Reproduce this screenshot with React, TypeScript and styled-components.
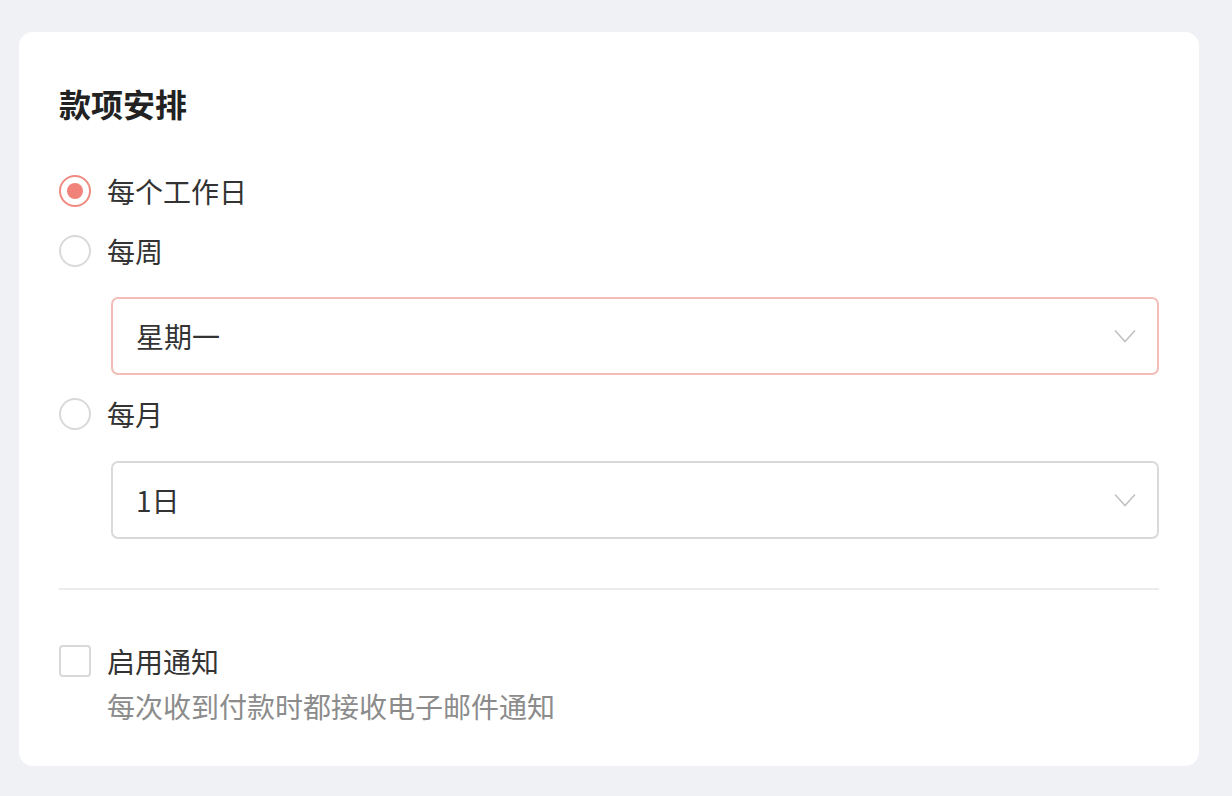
import React, { useState } from 'react';
import styled, { createGlobalStyle } from 'styled-components';

const GlobalStyle = createGlobalStyle`
  html, body {
    margin: 0;
    padding: 0;
    background: #f0f1f5;
  }
  body {
    font-family: "Noto Sans CJK SC", "Noto Sans", sans-serif;
    color: #333;
  }
`;

const options = [
  { key: 'day', label: '每个工作日' },
  { key: 'week', label: '每周', select: '星期一' },
  { key: 'month', label: '每月', select: '1日' },
];

export default function App() {
  const [picked, setPicked] = useState('day');
  const [notify, setNotify] = useState(false);

  return (
    <>
      <GlobalStyle />
      <Page>
        <Card>
          <Title>款项安排</Title>
          <Group>
            {options.map((o, i) => (
              <React.Fragment key={o.key}>
                <RadioRow first={i === 0} onClick={() => setPicked(o.key)}>
                  <Radio checked={picked === o.key} />
                  <Label>{o.label}</Label>
                </RadioRow>
                {o.select && (
                  <Select active={o.key === 'week'}>
                    <span>{o.select}</span>
                    <svg width="22" height="14" viewBox="0 0 22 14" fill="none">
                      <path d="M1 1.5l10 11 10-11" stroke="#c2c2c2" strokeWidth="1.6" />
                    </svg>
                  </Select>
                )}
              </React.Fragment>
            ))}
          </Group>
          <Divider />
          <CheckRow onClick={() => setNotify(!notify)}>
            <Checkbox checked={notify} />
            <div>
              <Label>启用通知</Label>
              <Hint>每次收到付款时都接收电子邮件通知</Hint>
            </div>
          </CheckRow>
        </Card>
      </Page>
    </>
  );
}

const Page = styled.div`
  padding: 32px 0 30px 19px;
`;

const Card = styled.div`
  width: 1180px;
  box-sizing: border-box;
  background: #fff;
  border-radius: 14px;
  padding: 48px 40px 40px;
`;

const Title = styled.h2`
  margin: 0;
  font-size: 32px;
  line-height: 46px;
  font-weight: 700;
  color: #222;
`;

const Group = styled.div`
  margin-top: 41px;
  display: flex;
  flex-direction: column;
`;

const RadioRow = styled.div<{ first?: boolean }>`
  display: flex;
  align-items: center;
  gap: 16px;
  height: 48px;
  margin-top: ${(p) => (p.first ? '0' : '12px')};
  cursor: pointer;
`;

const Radio = styled.span<{ checked?: boolean }>`
  width: 32px;
  height: 32px;
  box-sizing: border-box;
  border-radius: 50%;
  border: 2px solid ${(p) => (p.checked ? '#f08a80' : '#d9d9d9')};
  display: flex;
  align-items: center;
  justify-content: center;
  &::after {
    content: '';
    width: 16px;
    height: 16px;
    border-radius: 50%;
    background: #f08279;
    display: ${(p) => (p.checked ? 'block' : 'none')};
  }
`;

const Label = styled.div`
  font-size: 28px;
  line-height: 40px;
  color: #333;
`;

const Select = styled.div<{ active?: boolean }>`
  margin: 22px 0 3px 52px;
  height: 78px;
  box-sizing: border-box;
  border: 2px solid ${(p) => (p.active ? '#f2bdb6' : '#d9d9d9')};
  border-radius: 7px;
  padding: 0 21px 0 23px;
  display: flex;
  align-items: center;
  justify-content: space-between;
  font-size: 28px;
  color: #333;
  &:last-child {
    margin-top: 23px;
    margin-bottom: 0;
  }
`;

const Divider = styled.hr`
  margin: 49px 0 0;
  border: none;
  height: 2px;
  background: #ececec;
`;

const CheckRow = styled.div`
  margin-top: 51px;
  display: flex;
  align-items: flex-start;
  gap: 16px;
  cursor: pointer;
`;

const Checkbox = styled.span<{ checked?: boolean }>`
  width: 32px;
  height: 32px;
  margin-top: 4px;
  box-sizing: border-box;
  border: 2px solid #d9d9d9;
  border-radius: 4px;
  background: ${(p) => (p.checked ? '#f08279' : '#fff')};
  flex-shrink: 0;
`;

const Hint = styled.div`
  margin-top: 5px;
  font-size: 28px;
  line-height: 40px;
  color: #8c8c8c;
`;
